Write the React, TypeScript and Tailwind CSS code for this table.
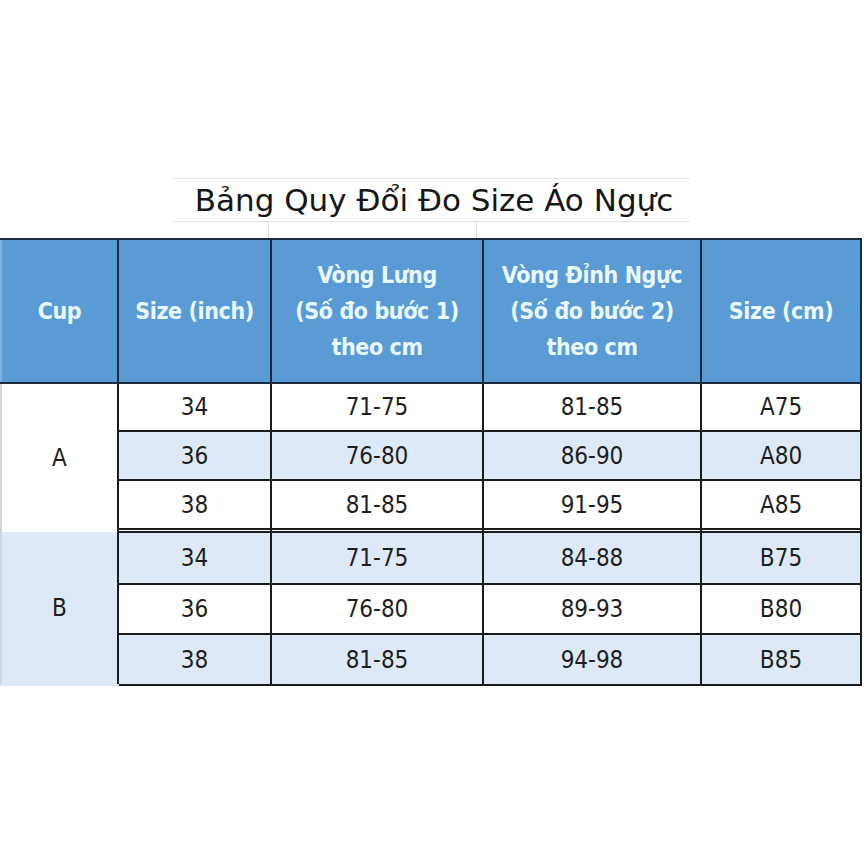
import React from 'react';

const groups = [
  {
    cup: 'A',
    rows: [
      { inch: '34', back: '71-75', bust: '81-85', size: 'A75', tint: false, h: 'h-[48px]' },
      { inch: '36', back: '76-80', bust: '86-90', size: 'A80', tint: true, h: 'h-[49px]' },
      { inch: '38', back: '81-85', bust: '91-95', size: 'A85', tint: false, h: 'h-[49px]' },
    ],
  },
  {
    cup: 'B',
    rows: [
      { inch: '34', back: '71-75', bust: '84-88', size: 'B75', tint: true, h: 'h-[52px]' },
      { inch: '36', back: '76-80', bust: '89-93', size: 'B80', tint: false, h: 'h-[50px]' },
      { inch: '38', back: '81-85', bust: '94-98', size: 'B85', tint: true, h: 'h-[51px]' },
    ],
  },
];

const headFont = { fontFamily: "'Liberation Sans Narrow', 'DejaVu Sans Condensed', 'DejaVu Sans', sans-serif" };
const bodyFont = { fontFamily: "'DejaVu Sans Condensed', 'DejaVu Sans', sans-serif" };

export default function App() {
  return (
    <div className="min-h-screen w-[864px] bg-white pt-[178px]" style={bodyFont}>
      {/* Title */}
      <div className="ml-[172px] w-[518px] h-[44px] border-y border-[#e2e2e2] flex items-center justify-center pl-[6px]">
        <h1 className="text-[31px] leading-none text-[#161616]" style={{ fontFamily: "'DejaVu Sans', sans-serif" }}>
          Bảng Quy Đổi Đo Size Áo Ngực
        </h1>
      </div>
      <div className="flex h-[16px]">
        <div className="w-[269px] border-r border-[#e2e2e2]"></div>
        <div className="w-[208px] border-r border-[#e2e2e2]"></div>
      </div>

      <table className="w-[860px] border-collapse table-fixed">
        <colgroup>
          <col className="w-[117px]" />
          <col className="w-[153px]" />
          <col className="w-[212px]" />
          <col className="w-[218px]" />
          <col className="w-[160px]" />
        </colgroup>
        <thead>
          <tr className="h-[144px] bg-[#5b9bd5] text-[#e8faff] text-[23px] leading-[36px] tracking-[-0.4px] font-bold" style={headFont}>
            <th className="border-2 border-[#1c2b3f] border-l-[#7fb0df] font-bold">Cup</th>
            <th className="border-2 border-[#1c2b3f] font-bold">Size (inch)</th>
            <th className="border-2 border-[#1c2b3f] font-bold">Vòng Lưng<br />(Số đo bước 1)<br />theo cm</th>
            <th className="border-2 border-[#1c2b3f] font-bold">Vòng Đỉnh Ngực<br />(Số đo bước 2)<br />theo cm</th>
            <th className="border-2 border-[#1c2b3f] font-bold">Size (cm)</th>
          </tr>
        </thead>
        <tbody className="text-[24px] text-[#1e1e1e] font-stretch-condensed">
          {groups.map((g, gi) => (
            <React.Fragment key={g.cup}>
              {g.rows.map((r, i) => (
                <tr key={r.inch} className={`${r.h} ${r.tint ? 'bg-[#dde9f6]' : 'bg-white'}`}>
                  {i === 0 && (
                    <td
                      rowSpan={gi === 0 ? 4 : 3}
                      className={`text-center border-l-2 border-l-[#cfd6de] border-r-2 border-r-[#1c1c1c] ${gi === 0 ? 'bg-white' : 'bg-[#dde9f6] border-b-2 border-b-[#dde9f6]'}`}
                    >
                      {g.cup}
                    </td>
                  )}
                  <td className="text-center border-2 border-[#1c1c1c]">{r.inch}</td>
                  <td className="text-center border-2 border-[#1c1c1c]">{r.back}</td>
                  <td className="text-center border-2 border-[#1c1c1c]">{r.bust}</td>
                  <td className="text-center border-2 border-[#1c1c1c]">{r.size}</td>
                </tr>
              ))}
              {gi === 0 && (
                <tr className="h-[3px] bg-white text-[0px] leading-none">
                  <td className="p-0 h-[3px] border-x-2 border-[#1c1c1c]"></td>
                  <td className="p-0 h-[3px] border-x-2 border-[#1c1c1c]"></td>
                  <td className="p-0 h-[3px] border-x-2 border-[#1c1c1c]"></td>
                  <td className="p-0 h-[3px] border-x-2 border-[#1c1c1c]"></td>
                </tr>
              )}
            </React.Fragment>
          ))}
        </tbody>
      </table>
    </div>
  );
}
